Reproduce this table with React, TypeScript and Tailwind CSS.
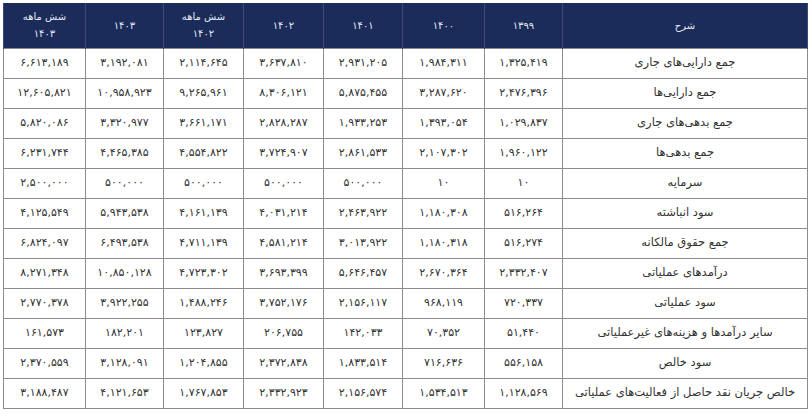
import React from "react";

const headers: { top?: string; main: string }[] = [
  { main: "شرح" },
  { main: "۱۳۹۹" },
  { main: "۱۴۰۰" },
  { main: "۱۴۰۱" },
  { main: "۱۴۰۲" },
  { top: "شش ماهه", main: "۱۴۰۲" },
  { main: "۱۴۰۳" },
  { top: "شش ماهه", main: "۱۴۰۳" },
];

const widths = ["w-[245px]", "w-[78px]", "w-[82px]", "w-[79px]", "w-[80px]", "w-[80px]", "w-[78px]", "w-[82px]"];

const rows: string[][] = [
  ["جمع دارایی‌های جاری", "۱,۳۲۵,۴۱۹", "۱,۹۸۴,۳۱۱", "۲,۹۳۱,۲۰۵", "۳,۶۳۷,۸۱۰", "۲,۱۱۴,۶۴۵", "۳,۱۹۲,۰۸۱", "۶,۶۱۳,۱۸۹"],
  ["جمع دارایی‌ها", "۲,۴۷۶,۳۹۶", "۳,۲۸۷,۶۲۰", "۵,۸۷۵,۴۵۵", "۸,۳۰۶,۱۲۱", "۹,۲۶۵,۹۶۱", "۱۰,۹۵۸,۹۲۳", "۱۲,۶۰۵,۸۲۱"],
  ["جمع بدهی‌های جاری", "۱,۰۲۹,۸۳۷", "۱,۳۹۳,۰۵۴", "۱,۹۳۳,۲۵۳", "۲,۸۲۸,۲۸۷", "۳,۶۶۱,۱۷۱", "۳,۳۲۰,۹۷۷", "۵,۸۲۰,۰۸۶"],
  ["جمع بدهی‌ها", "۱,۹۶۰,۱۲۲", "۲,۱۰۷,۳۰۲", "۲,۸۶۱,۵۳۳", "۳,۷۲۴,۹۰۷", "۴,۵۵۴,۸۲۲", "۴,۴۶۵,۳۸۵", "۶,۲۳۱,۷۴۴"],
  ["سرمایه", "۱۰", "۱۰", "۵۰۰,۰۰۰", "۵۰۰,۰۰۰", "۵۰۰,۰۰۰", "۵۰۰,۰۰۰", "۲,۵۰۰,۰۰۰"],
  ["سود انباشته", "۵۱۶,۲۶۴", "۱,۱۸۰,۳۰۸", "۲,۴۶۳,۹۲۲", "۴,۰۳۱,۲۱۴", "۴,۱۶۱,۱۳۹", "۵,۹۴۳,۵۳۸", "۴,۱۲۵,۵۴۹"],
  ["جمع حقوق مالکانه", "۵۱۶,۲۷۴", "۱,۱۸۰,۳۱۸", "۳,۰۱۳,۹۲۲", "۴,۵۸۱,۲۱۴", "۴,۷۱۱,۱۳۹", "۶,۴۹۳,۵۳۸", "۶,۸۲۴,۰۹۷"],
  ["درآمدهای عملیاتی", "۲,۳۳۲,۴۰۷", "۲,۶۷۰,۳۶۴", "۵,۶۴۶,۴۵۷", "۳,۶۹۳,۳۹۹", "۴,۷۲۳,۳۰۲", "۱۰,۸۵۰,۱۲۸", "۸,۲۷۱,۳۴۸"],
  ["سود عملیاتی", "۷۲۰,۳۳۷", "۹۶۸,۱۱۹", "۲,۱۵۶,۱۱۷", "۳,۷۵۲,۱۷۶", "۱,۴۸۸,۲۴۶", "۳,۹۲۲,۲۵۵", "۲,۷۷۰,۳۷۸"],
  ["سایر درآمدها و هزینه‌های غیرعملیاتی", "۵۱,۴۴۰", "۷۰,۳۵۲", "۱۴۲,۰۳۳", "۲۰۶,۷۵۵", "۱۲۳,۸۲۷", "۱۸۲,۲۰۱", "۱۶۱,۵۷۳"],
  ["سود خالص", "۵۵۶,۱۵۸", "۷۱۶,۶۳۶", "۱,۸۳۳,۵۱۴", "۲,۳۷۲,۸۳۸", "۱,۲۰۴,۸۵۵", "۳,۱۲۸,۰۹۱", "۲,۳۷۰,۵۵۹"],
  ["خالص جریان نقد حاصل از فعالیت‌های عملیاتی", "۱,۱۲۸,۵۶۹", "۱,۵۳۴,۵۱۳", "۲,۱۵۶,۵۷۴", "۲,۳۳۲,۹۲۳", "۱,۷۶۷,۸۵۳", "۴,۱۲۱,۶۵۳", "۳,۱۸۸,۴۸۷"],
];

export default function App() {
  return (
    <div className="w-[812px] h-[416px] bg-white overflow-hidden pt-[3px] pl-[3px]" style={{ fontFamily: '"DejaVu Sans", sans-serif' }}>
      <table dir="rtl" className="table-fixed border-collapse w-[804px]">
        <colgroup>
          {widths.map((w, i) => (
            <col key={i} className={w} />
          ))}
        </colgroup>
        <thead>
          <tr className="h-[45px] bg-[#1b2b5a]">
            {headers.map((h, i) => (
              <th key={i} className="border-x border-[#3c4a74] p-0 text-center align-middle font-normal text-[#e6e9f2] text-[10px] leading-[17px]">
                {h.top && <div>{h.top}</div>}
                <div>{h.main}</div>
              </th>
            ))}
          </tr>
        </thead>
        <tbody>
          {rows.map((r, ri) => (
            <tr key={ri} className="h-[30px]">
              {r.map((c, ci) => (
                <td
                  key={ci}
                  className={`border border-[#8c8c8c] p-0 text-center align-middle text-[#333333] ${ci === 0 ? "text-[11.5px]" : "text-[11px]"}`}
                >
                  {c}
                </td>
              ))}
            </tr>
          ))}
        </tbody>
      </table>
    </div>
  );
}
